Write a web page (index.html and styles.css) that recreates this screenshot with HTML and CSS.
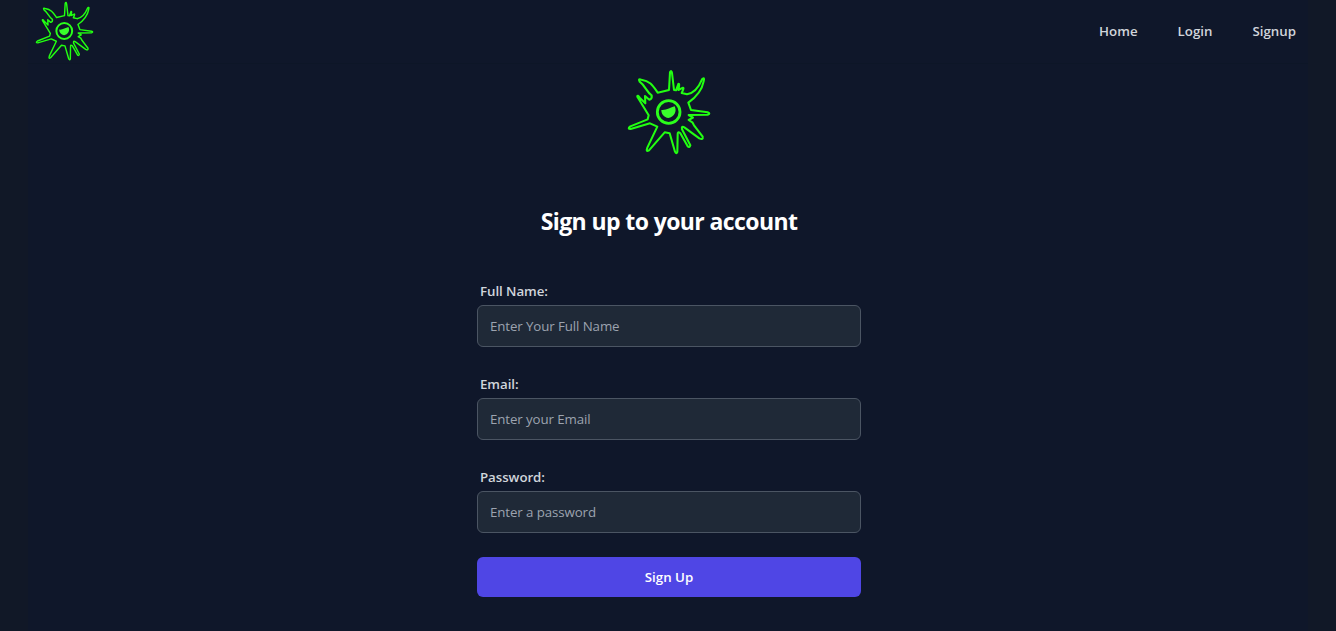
FILE: index.html
```html
<!DOCTYPE html>
<html lang="en">
<head>
<meta charset="utf-8">
<title>Sign up</title>
<link rel="stylesheet" href="styles.css">
</head>
<body>
<svg width="0" height="0" class="defs" aria-hidden="true">
  <symbol id="logo" viewBox="21 15 252 258">
    <path class="outline" d="M113 86L147 78L150 25Q154 17 156 27L162 78L168 79L175 60Q180 57 175 78L189 71Q193 71 185 87L201 91C223 87 237 68 246 46Q255 37 251 52C246 78 226 101 205 116L213 138L263 145Q273 148 263 152L206 153L219 161L206 168L217 175L222 184L248 218Q250 229 238 223L193 190Q184 184 186 196L211 244Q208 252 203 247L181 208Q172 200 173 212L172 264Q169 272 165 263L149 208L134 205L87 259Q77 265 82 251L112 188L90 178L32 195Q21 195 31 187L83 166L86 154L52 98Q52 91 59 101L76 118L75 96L88 107Q97 104 95 94C79 84 77 66 59 53Q53 43 64 47C91 51 99 66 113 86Z"/>
    <circle class="ring" cx="146" cy="144" r="34"/>
    <path class="pupil" d="M124 138C139 140 151 130 164 127C172 143 162 160 145 162C132 160 124 151 124 138Z"/>
  </symbol>
</svg>
<div class="page">
  <header class="header">
    <svg class="brand"><use href="#logo"/></svg>
    <nav class="nav"><a class="home">Home</a><a class="login">Login</a><a class="signup">Signup</a></nav>
  </header>
  <main class="main">
    <svg class="hero"><use href="#logo"/></svg>
    <h1 class="title">Sign up to your account</h1>
    <form class="form">
      <div class="field"><label for="name">Full Name:</label><input id="name" type="text" placeholder="Enter Your Full Name"></div>
      <div class="field"><label for="email">Email:</label><input id="email" type="email" placeholder="Enter your Email"></div>
      <div class="field"><label for="password">Password:</label><input id="password" type="password" placeholder="Enter a password"></div>
      <button type="button" class="submit">Sign Up</button>
    </form>
  </main>
</div>
</body>
</html>
```
FILE: styles.css
```css
* { box-sizing: border-box; }
body { margin: 0; background: #111827; font-family: "Open Sans", sans-serif; font-size: 13.3px; line-height: 20px; color: #d1d5db; overflow: hidden; }
.defs { display: none; }
.page { width: 1280px; height: 631px; margin: 0 auto; background: #0f172a; }
.header { display: flex; align-items: center; justify-content: space-between; height: 64px; padding: 0 12px 2px 7px; border-bottom: 1px solid #0d1627; }
.brand { width: 59px; height: 60px; }
.nav { display: flex; gap: 40px; padding-top: 1px; font-weight: 650; }
.main { display: flex; flex-direction: column; align-items: center; padding: 5px 0 0 2px; }
.hero { width: 84px; height: 86px; }
.outline { fill: none; stroke: #22ff11; stroke-width: 6.2; stroke-linejoin: round; }
.ring { fill: none; stroke: #2bff1b; stroke-width: 8.5; }
.pupil { fill: #39ff2b; }
.title { margin: 50px 0 44px; font-size: 23px; line-height: 32px; font-weight: 700; letter-spacing: -0.6px; color: #fff; }
.form { width: 384px; }
.field { display: flex; flex-direction: column; gap: 4px; margin-bottom: 24px; }
.field + .field { padding-top: 3px; }
.field label { padding-left: 3px; font-weight: 650; letter-spacing: -0.06px; }
.field input { height: 42px; padding: 0 12px; border: 1px solid #4b5563; border-radius: 6px; background: #1f2937; font: inherit; letter-spacing: -0.1px; color: #fff; }
.field input::placeholder { color: #9ca3af; }
.submit { display: block; width: 384px; height: 40px; border: 0; border-radius: 6px; background: #4f46e5; color: #fff; font: inherit; font-weight: 650; }
```
